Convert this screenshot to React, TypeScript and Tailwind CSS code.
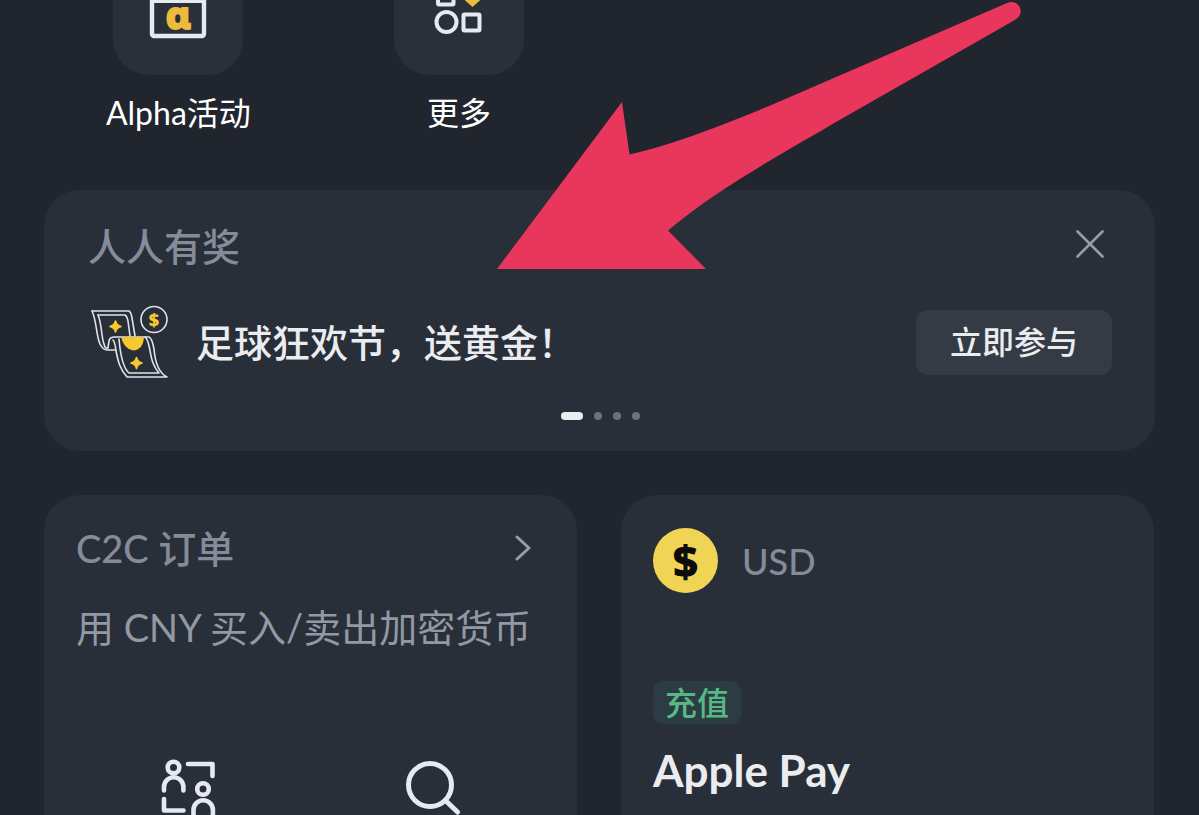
import type { ReactNode } from "react";

function AlphaIcon() {
  return (
    <svg className="h-10 w-15" viewBox="0 0 60 40" fill="none" aria-hidden="true">
      <rect x="4" y="-20" width="52" height="56" rx="2" stroke="#e6e9f0" strokeWidth="4.400" />
      <path d="M6 1.500H54" stroke="#e6e9f0" strokeWidth="3" />
      <text
        x="30"
        y="29"
        textAnchor="middle"
        fill="#ecbb3c"
        stroke="#ecbb3c"
        strokeWidth="2"
        fontSize="38"
        className="font-['Open_Sans','Noto_Sans','DejaVu_Sans',sans-serif] font-extrabold"
      >
        ɑ
      </text>
    </svg>
  );
}

function MoreIcon() {
  return (
    <svg className="h-10 w-15" viewBox="0 0 60 40" fill="none" stroke="#e6e9f0" strokeWidth="4" aria-hidden="true">
      <rect x="9" y="-11" width="15.500" height="15.500" rx="1" />
      <path d="M43.500-9L52.500 -1L43.500 7L34.500 -1Z" fill="#ecbb3c" stroke="none" />
      <circle cx="17.500" cy="22" r="10" />
      <rect x="34.500" y="14.500" width="16" height="16" rx="1" />
    </svg>
  );
}

function BanknoteIcon() {
  return (
    <svg
      className="h-19 w-20 shrink-0"
      viewBox="-3 -2 80 76"
      fill="none"
      stroke="#dfe3ea"
      strokeWidth="1.600"
      strokeLinejoin="round"
      strokeLinecap="round"
      aria-hidden="true"
    >
      <path d="M1 5H38Q40 6 41 12L44 30" />
      <path d="M1 5C6 16 5 29 9 38Q12 44 16 44H24" />
      <path d="M7 9H34Q36 10 37 15L39 30" />
      <path d="M7 9C11 18 10 30 13 38Q14 43 17 42C18 34 18 31 23 31H58Q61 32 63 43C64 55 68 67 76 71H36C28 62 27 54 25 45Q24 36 22 34" />
      <path d="M28 33C29 45 31 61 38 67H68C60 58 60 48 58 40Q57 34 54 31" />
      <path d="M30 31H53Q52 44 42 44.500Q33 43 30 31Z" fill="#f5c92f" stroke="none" />
      <path d="M24.500 15Q25.500 19.500 30 20.500Q25.500 21.500 24.500 26Q23.500 21.500 19 20.500Q23.500 19.500 24.500 15Z" fill="#f5c92f" stroke="#f5c92f" />
      <path d="M45.500 51.500Q46.500 56 51 57Q46.500 58 45.500 62.500Q44.500 58 40 57Q44.500 56 45.500 51.500Z" fill="#f5c92f" stroke="#f5c92f" />
      <circle cx="63" cy="13.500" r="13" />
      <text
        x="63"
        y="20"
        textAnchor="middle"
        fill="#f5c92f"
        stroke="none"
        fontSize="18"
        className="font-['Open_Sans',sans-serif] font-extrabold"
      >
        $
      </text>
    </svg>
  );
}

function PeopleIcon() {
  return (
    <svg
      className="h-14 w-15"
      viewBox="0 0 60 56"
      fill="none"
      stroke="#e6e9f0"
      strokeWidth="4.600"
      strokeLinecap="round"
      strokeLinejoin="round"
      aria-hidden="true"
    >
      <circle cx="15.500" cy="8.500" r="5.800" />
      <path d="M6 31.500V28A9.700 9.700 0 0 1 25.400 28V31.500" />
      <path d="M30 5H54.500V17" />
      <path d="M6 40V51.500H25.500" />
      <circle cx="45" cy="30" r="5.800" />
      <path d="M35.500 56V51A9.700 9.700 0 0 1 54.900 51V56" />
    </svg>
  );
}

function SearchIcon() {
  return (
    <svg className="h-14 w-15" viewBox="0 0 60 56" fill="none" stroke="#e6e9f0" strokeWidth="5" strokeLinecap="round" aria-hidden="true">
      <circle cx="27" cy="26" r="21.500" />
      <path d="M43 42L54.500 53" />
    </svg>
  );
}

function Shortcut({ label, children }: { label: string; children: ReactNode }) {
  return (
    <a href="#" className="flex flex-col items-center gap-4">
      <span className="flex h-[75px] w-[130px] justify-center rounded-b-[36px] bg-[#2a303a]">{children}</span>
      <span className="text-[32px] leading-[44px] text-white">{label}</span>
    </a>
  );
}

function Pointer() {
  return (
    <svg
      className="pointer-events-none absolute top-0 left-[490px] h-[280px] w-[540px]"
      viewBox="490 0 540 280"
      aria-hidden="true"
    >
      <path
        d="M497 269L622 102L629.500 154.500C682 143 750 114 783 100L1007 3C1019-2 1027 14 1014 20.500L843 118C790 149 715 190 668 230.500L706 269Z"
        fill="#e8365d"
      />
    </svg>
  );
}

export default function App() {
  return (
    <main className="relative flex min-h-screen flex-col overflow-hidden bg-[#21252e] font-['Lato','Noto_Sans_CJK_SC',sans-serif]">
      <nav className="grid grid-cols-4 px-[38px]">
        <Shortcut label="Alpha活动">
          <AlphaIcon />
        </Shortcut>
        <Shortcut label="更多">
          <MoreIcon />
        </Shortcut>
      </nav>

      <section className="mx-11 mt-[55px] rounded-[36px] bg-[#292f39] pt-8 pr-[43px] pb-[31px] pl-11">
        <header className="flex items-start justify-between">
          <h2 className="text-[38px] leading-12 font-medium text-[#858b98]">人人有奖</h2>
          <button type="button" aria-label="关闭" className="p-2">
            <svg className="size-7" viewBox="0 0 28 28" fill="none" stroke="#989da8" strokeWidth="2.600" strokeLinecap="round">
              <path d="M1.500 1.500L26.500 26.500M26.500 1.500L1.500 26.500" />
            </svg>
          </button>
        </header>
        <div className="mt-[34px] flex items-center">
          <BanknoteIcon />
          <p className="ml-7 flex-1 text-[38px] leading-12 font-medium text-[#eaecef]">足球狂欢节，送黄金！</p>
          <button type="button" className="h-[65px] rounded-xl bg-[#353b45] px-[34px] text-[32px] leading-10 font-medium text-[#eaecef]">
            立即参与
          </button>
        </div>
        <div className="mt-8 flex justify-center gap-[11px]">
          <span className="h-2 w-[22px] rounded-full bg-[#eaecef]" />
          <span className="size-2 rounded-full bg-[#6b717d]" />
          <span className="size-2 rounded-full bg-[#6b717d]" />
          <span className="size-2 rounded-full bg-[#6b717d]" />
        </div>
      </section>

      <div className="mt-11 mr-[45px] ml-11 grid flex-1 grid-cols-2 gap-11">
        <section className="rounded-t-[36px] bg-[#292f39] pt-[29px]">
          <a href="#" className="flex items-center justify-between pr-[46px] pl-8 text-[#858b98]">
            <h2 className="text-[38px] leading-12 font-medium">C2C 订单</h2>
            <svg className="h-7 w-4" viewBox="0 0 16 28" fill="none" stroke="#989da8" strokeWidth="3" strokeLinecap="round" strokeLinejoin="round" aria-hidden="true">
              <path d="M2 3L14 14L2 25" />
            </svg>
          </a>
          <p className="mt-[31px] pl-8 text-[38px] leading-12 whitespace-nowrap text-[#9298a4]">用 CNY 买入/卖出加密货币</p>
          <div className="mt-[108px] grid grid-cols-2 justify-items-center px-[22px]">
            <button type="button" aria-label="C2C 交易">
              <PeopleIcon />
            </button>
            <button type="button" aria-label="搜索">
              <SearchIcon />
            </button>
          </div>
        </section>

        <section className="rounded-t-[36px] bg-[#292f39] px-8 pt-[33px]">
          <div className="flex items-center gap-6">
            <span className="flex size-[65px] items-center justify-center rounded-full bg-[#f2d455] font-['Open_Sans',sans-serif] text-[44px] leading-none font-extrabold text-[#0c0c0c]">
              $
            </span>
            <h2 className="text-[36px] leading-12 font-medium text-[#858b98]">USD</h2>
          </div>
          <div className="mt-[88px] flex">
            <span className="rounded-[10px] bg-[#2c3c42] px-3 text-[32px] leading-[43px] font-medium text-[#58b885]">充值</span>
          </div>
          <p className="mt-5 text-[44px] leading-13 font-bold text-[#eaecef]">Apple Pay</p>
        </section>
      </div>

      <Pointer />
    </main>
  );
}
